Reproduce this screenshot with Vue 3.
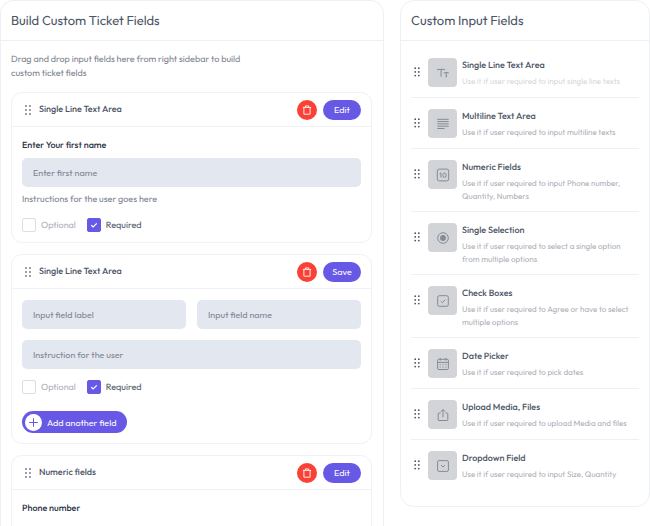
<script setup>
import { reactive } from 'vue'

const cards = reactive([
  { id: 'first', title: 'Single Line Text Area', action: 'Edit', kind: 'preview', optional: false, required: true },
  { id: 'second', title: 'Single Line Text Area', action: 'Save', kind: 'editor', optional: false, required: true },
  { id: 'third', title: 'Numeric fields', action: 'Edit', kind: 'numeric' }
])

const fields = [
  { icon: 'text', title: 'Single Line Text Area', text: 'Use it if user required to input single line texts', faded: true },
  { icon: 'lines', title: 'Multiline Text Area', text: 'Use it if user required to input multiline texts' },
  { icon: 'number', title: 'Numeric Fields', text: 'Use it if user required to input Phone number, Quantity, Numbers' },
  { icon: 'radio', title: 'Single Selection', text: 'Use it if user required to select a single option from multiple options' },
  { icon: 'check', title: 'Check Boxes', text: 'Use it if user required to Agree or have to select multiple options' },
  { icon: 'date', title: 'Date Picker', text: 'Use it if user required to pick dates' },
  { icon: 'upload', title: 'Upload Media, Files', text: 'Use it if user required to upload Media and files' },
  { icon: 'dropdown', title: 'Dropdown Field', text: 'Use it if user required to input Size, Quantity' }
]
</script>

<template>
  <main class="page">
    <section class="panel builder">
      <h1 class="panel-title">Build Custom Ticket Fields</h1>
      <div class="builder-body">
        <p class="intro">Drag and drop input fields here from right sidebar to build custom ticket fields</p>

        <article v-for="card in cards" :key="card.id" class="card">
          <header class="card-head">
            <svg class="handle" viewBox="0 0 8 12" aria-hidden="true">
              <path d="M1.2 1.2h1.5v1.5h-1.5zM5.2 1.2h1.5v1.5h-1.5zM1.2 5.2h1.5v1.5h-1.5zM5.2 5.2h1.5v1.5h-1.5zM1.2 9.2h1.5v1.5h-1.5zM5.2 9.2h1.5v1.5h-1.5z" />
            </svg>
            <h2 class="card-title">{{ card.title }}</h2>
            <div class="actions">
              <button type="button" class="delete" aria-label="Delete field">
                <svg viewBox="0 0 10 10" aria-hidden="true">
                  <path d="M.9 2.4h8.2M3.4 2.2V.9h3.2v1.3M1.9 2.6v6.6h6.2V2.6" />
                </svg>
              </button>
              <button type="button" class="action">{{ card.action }}</button>
            </div>
          </header>

          <div class="card-body">
            <template v-if="card.kind === 'preview'">
              <label class="label" for="first-name">Enter Your first name</label>
              <input id="first-name" class="text-input" type="text" placeholder="Enter first name" />
              <p class="hint">Instructions for the user goes here</p>
            </template>

            <div v-else-if="card.kind === 'editor'" class="editor">
              <input class="text-input" type="text" placeholder="Input field label" aria-label="Input field label" />
              <input class="text-input" type="text" placeholder="Input field name" aria-label="Input field name" />
              <input class="text-input wide" type="text" placeholder="Instruction for the user" aria-label="Instruction for the user" />
            </div>

            <p v-else class="label">Phone number</p>

            <div v-if="card.kind !== 'numeric'" class="options">
              <label class="option" :class="{ on: card.optional }">
                <span class="box">
                  <input v-model="card.optional" type="checkbox" />
                  <svg viewBox="0 0 14 14" aria-hidden="true"><path d="M4.2 7.1l1.9 1.8 3.7-3.5" /></svg>
                </span>
                Optional
              </label>
              <label class="option" :class="{ on: card.required }">
                <span class="box">
                  <input v-model="card.required" type="checkbox" />
                  <svg viewBox="0 0 14 14" aria-hidden="true"><path d="M4.2 7.1l1.9 1.8 3.7-3.5" /></svg>
                </span>
                Required
              </label>
            </div>

            <button v-if="card.kind === 'editor'" type="button" class="add">
              <svg viewBox="0 0 17 17" aria-hidden="true">
                <circle cx="8.5" cy="8.5" r="8.5" />
                <path d="M8.5 4.2v8.6M4.2 8.5h8.6" />
              </svg>
              Add another field
            </button>
          </div>
        </article>
      </div>
    </section>

    <aside class="panel">
      <h1 class="panel-title">Custom Input Fields</h1>
      <ul class="list">
        <li v-for="field in fields" :key="field.title" class="item">
          <svg class="handle round" viewBox="0 0 8 12" aria-hidden="true">
            <circle cx="2.2" cy="2.2" r=".9" /><circle cx="5.8" cy="2.2" r=".9" />
            <circle cx="2.2" cy="5.9" r=".9" /><circle cx="5.8" cy="5.9" r=".9" />
            <circle cx="2.2" cy="9.6" r=".9" /><circle cx="5.8" cy="9.6" r=".9" />
          </svg>
          <span class="tile">
            <svg viewBox="0 0 14 14" aria-hidden="true">
              <path v-if="field.icon === 'text'" d="M1.6 4.2V3.4h7v.8M5.1 3.4v7.3M8.2 7.4v-.7h4.2v.7M10.3 6.7v4M9.5 10.7h1.6" />
              <path v-else-if="field.icon === 'lines'" d="M1.3 2.3h11.4M1.3 4.6h11.4M1.3 6.9h11.4M1.3 9.2h11.4M1.3 11.5h7.2" />
              <g v-else-if="field.icon === 'number'">
                <rect x="1.3" y="1.1" width="11.4" height="11.8" rx="2" />
                <path d="M3.6 5.8l1.3-.9v4.6" />
                <rect x="6.9" y="5" width="3.1" height="4.4" rx="1.5" />
              </g>
              <g v-else-if="field.icon === 'radio'">
                <circle cx="7" cy="7" r="5.3" />
                <circle class="solid" cx="7" cy="7" r="2.9" />
              </g>
              <g v-else-if="field.icon === 'check'">
                <rect x="1.7" y="1.7" width="10.6" height="10.6" rx="1.6" />
                <path d="M4.8 7.2l1.6 1.5 3-3" />
              </g>
              <g v-else-if="field.icon === 'date'">
                <rect x="1.6" y="2.3" width="10.8" height="10.2" rx="1.2" />
                <path d="M1.6 5.4h10.8M4.2 .9v2.7M9.9 .9v2.7" />
                <path d="M6.4 7.6h1.1M9.3 7.6h1.1M3.6 10.1h1.1M6.4 10.1h1.1M9.3 10.1h1.1M3.6 7.6h1.1" />
              </g>
              <path v-else-if="field.icon === 'upload'" d="M4.5 5.1H2.7q-.5 0-.5.5v6.4q0 .5.5.5h8.6q.5 0 .5-.5V5.6q0-.5-.5-.5H9.5M7 9.2V1.6M4.8 3.8L7 1.5l2.2 2.3" />
              <g v-else>
                <rect x="1.6" y="1.6" width="10.8" height="10.8" rx="1.3" />
                <path d="M5 6.1l2 1.9 2-1.9" />
              </g>
            </svg>
          </span>
          <div class="item-text">
            <h2 class="item-title">{{ field.title }}</h2>
            <p class="item-desc" :class="{ faded: field.faded }">{{ field.text }}</p>
          </div>
        </li>
      </ul>
    </aside>
  </main>
</template>

<style>
body {
  background: #fff;
}
</style>

<style scoped>
.page {
  display: grid;
  grid-template-columns: minmax(0, 384fr) minmax(0, 250fr);
  align-items: start;
  gap: 16px;
  height: 100vh;
  overflow: hidden;
  font-family: Outfit, Lato, sans-serif;
  font-size: 9px;
  color: #4d5566;
  text-rendering: geometricPrecision;
}

.page * {
  box-sizing: border-box;
}

h1,
h2,
p,
ul {
  margin: 0;
  padding: 0;
  font-weight: 500;
}

button,
input {
  font: inherit;
  margin: 0;
}

button {
  border: 0;
  cursor: pointer;
}

.panel {
  border: 1px solid #edf0f5;
  border-radius: 14px;
}

.builder {
  border-bottom: 0;
  border-bottom-left-radius: 0;
  border-bottom-right-radius: 0;
}

.panel-title {
  padding: 2px 10px 0;
  border-bottom: 1px solid #edf0f5;
  font-size: 13px;
  line-height: 37px;
  font-weight: 400;
}

.builder-body {
  display: flex;
  flex-direction: column;
  gap: 11px;
  padding: 12px 11px 12px 10px;
}

.intro {
  max-width: 240px;
  line-height: 14px;
  font-weight: 400;
  color: #7d8390;
}

.card {
  border: 1px solid #f1f2f5;
  border-radius: 11px;
}

.card-head {
  display: flex;
  align-items: center;
  gap: 7px;
  height: 34px;
  padding: 0 10px 0 12px;
  border-bottom: 1px solid #f1f2f5;
}

.handle {
  flex: none;
  width: 8px;
  height: 12px;
  fill: #4d5566;
}

.card-title {
  flex: 1;
  font-size: 9px;
}

.actions {
  display: flex;
  gap: 6px;
}

.delete,
.action {
  height: 20px;
  border-radius: 10px;
  padding: 0;
  color: #fff;
}

.delete {
  display: grid;
  place-items: center;
  width: 20px;
  background: #f94235;
}

.delete svg {
  width: 10px;
  height: 10px;
  fill: none;
  stroke: #fff;
  stroke-width: 0.9;
}

.action {
  width: 38px;
  background: #6759e6;
}

.card-body {
  padding: 11px 10px 10px;
}

.card:last-child .card-body {
  min-height: 64px;
}

.label {
  display: block;
  line-height: 16px;
  font-weight: 500;
  color: #2c3345;
}

.text-input {
  width: 100%;
  height: 29px;
  padding: 0 11px;
  border: 0;
  border-radius: 5px;
  background: #e3e8f0;
  color: #4d5566;
}

.text-input::placeholder {
  color: #7d8390;
  opacity: 1;
}

.label + .text-input {
  margin-top: 4px;
}

.hint {
  margin-top: 6px;
  line-height: 14px;
  font-weight: 400;
  color: #7d8390;
}

.editor {
  display: grid;
  grid-template-columns: 1fr 1fr;
  gap: 11px;
}

.wide {
  grid-column: 1 / -1;
}

.options {
  display: flex;
  gap: 11px;
  margin-top: 11px;
}

.option {
  display: flex;
  align-items: center;
  gap: 5px;
  color: #abafb7;
}

.option.on {
  color: #4d5566;
}

.box {
  display: grid;
  width: 14px;
  height: 14px;
}

.box > * {
  grid-area: 1 / 1;
  width: 14px;
  height: 14px;
}

.box input {
  appearance: none;
  border: 1px solid #dcdee2;
  border-radius: 2px;
}

.box input:checked {
  border-color: #6759e6;
  background: #6759e6;
}

.box svg {
  fill: none;
  stroke: #fff;
  stroke-width: 1.3;
  pointer-events: none;
}

.add {
  display: flex;
  align-items: center;
  gap: 5px;
  height: 22px;
  margin-top: 17px;
  padding: 0 11px 0 3px;
  border-radius: 11px;
  background: #6759e6;
  color: #fff;
}

.add svg {
  width: 17px;
  height: 17px;
  fill: #fff;
}

.add path {
  stroke: #6759e6;
}

.list {
  padding: 6px 10px 16px;
  list-style: none;
}

.item {
  display: flex;
  align-items: flex-start;
  padding: 11px 0 7px 2px;
  border-bottom: 1px solid #edf0f5;
}

.item:last-child {
  border-bottom: 0;
}

.round {
  margin-top: 8px;
}

.tile {
  display: grid;
  flex: none;
  place-items: center;
  width: 29px;
  height: 29px;
  margin: 0 5px 3px 7px;
  border-radius: 4px;
  background: #d2d4d8;
}

.tile svg {
  width: 14px;
  height: 14px;
  fill: none;
  stroke: #858b94;
  stroke-width: 1;
}

.tile .solid {
  fill: #858b94;
  stroke: none;
}

.item-text {
  padding-top: 1px;
}

.item-title {
  font-size: 9px;
  line-height: 14px;
}

.item-desc {
  max-width: 172px;
  margin-top: 3px;
  font-size: 8px;
  line-height: 13px;
  font-weight: 400;
  color: #abafb7;
}

.item-desc.faded {
  color: #d5d7db;
}
</style>
